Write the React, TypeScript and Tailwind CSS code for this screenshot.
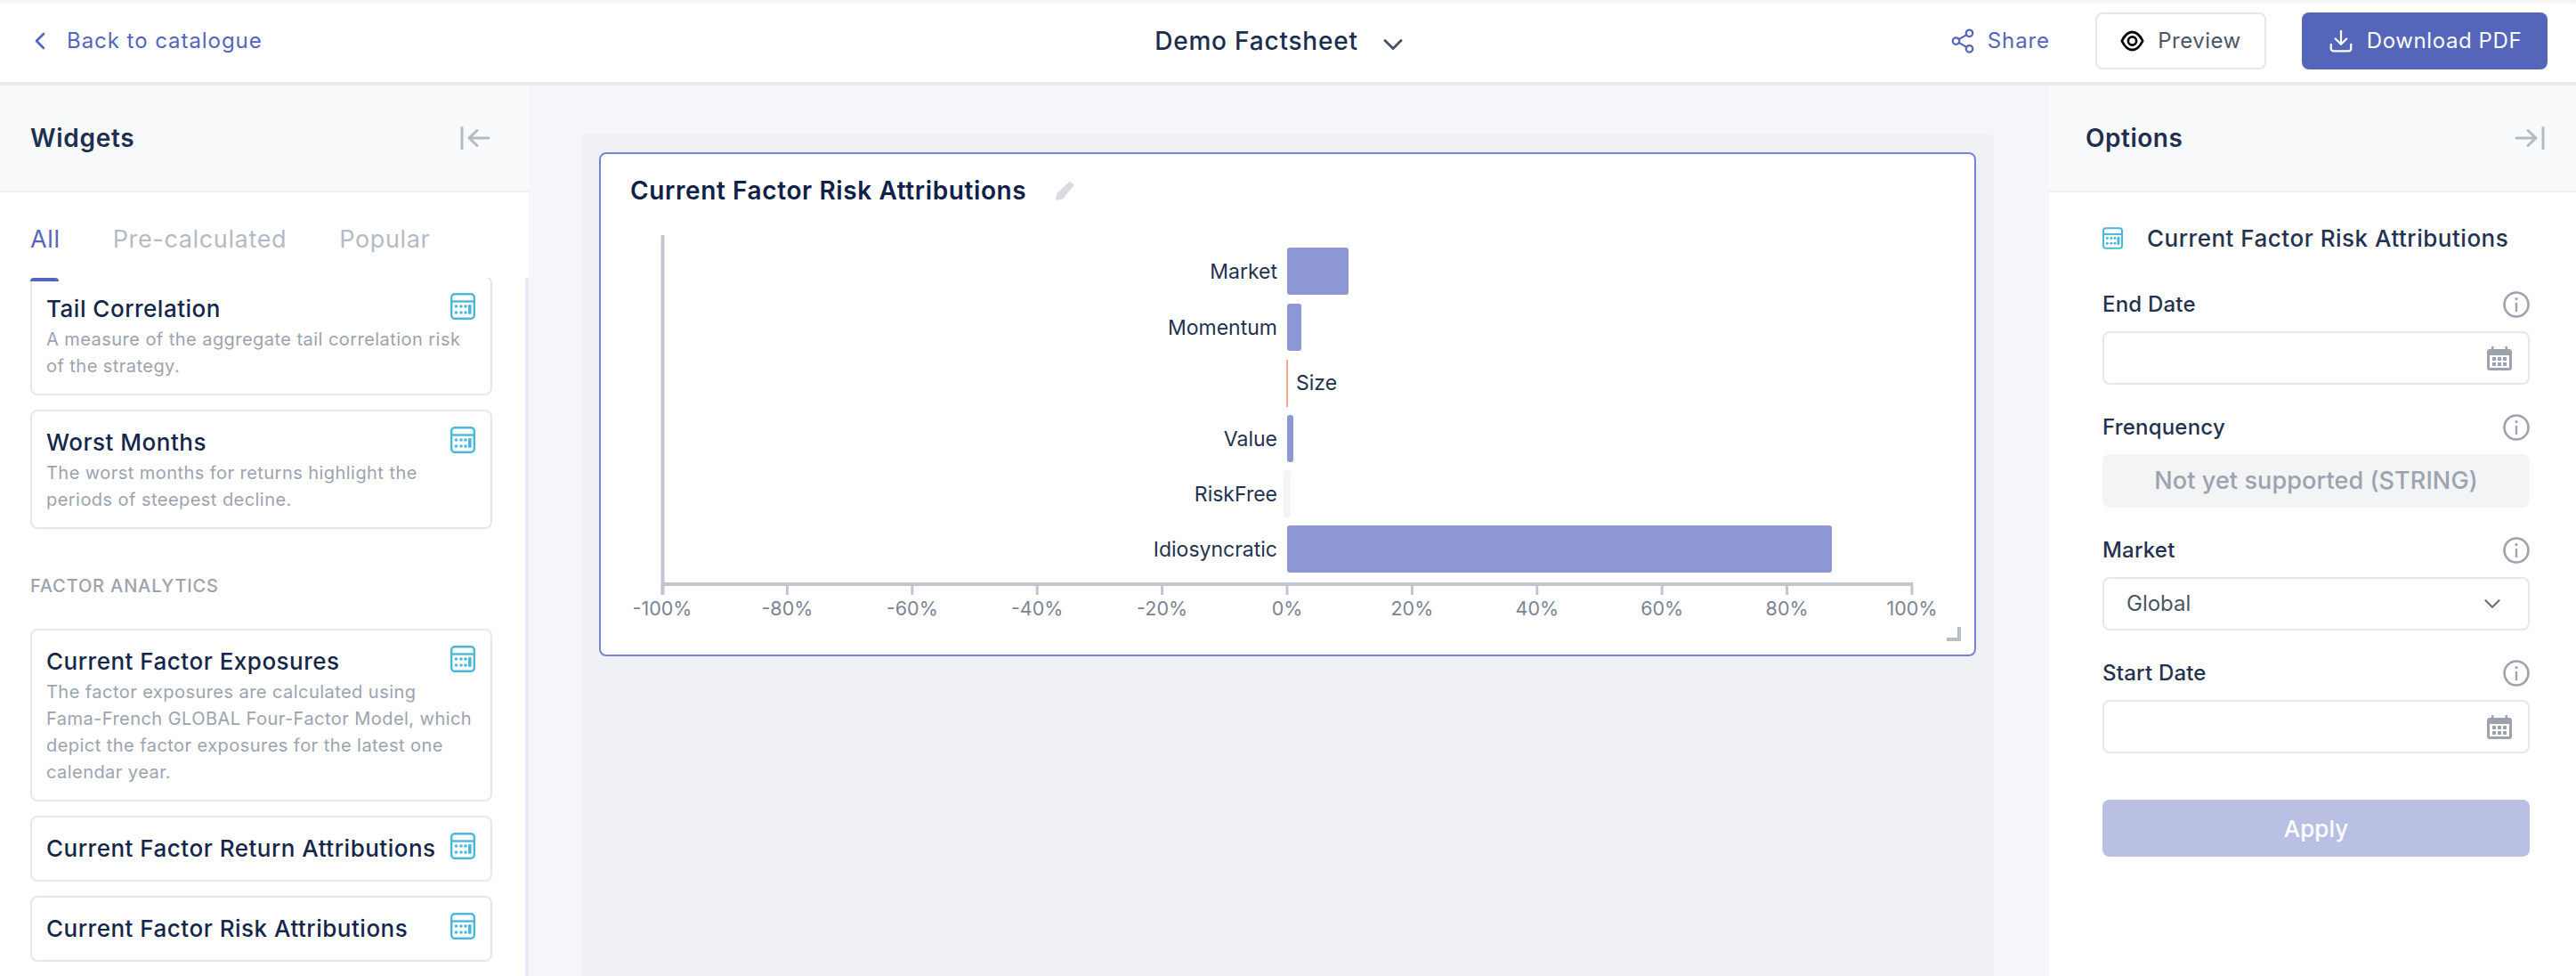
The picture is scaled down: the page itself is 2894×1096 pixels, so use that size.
import { ChevronDown, ChevronLeft, Share2, Download } from "lucide-react"

const BARS = [
  { label: "Market", y: 278, from: 1446, to: 1515, color: "#8d97d3" },
  { label: "Momentum", y: 341, from: 1446, to: 1462, color: "#8d97d3" },
  { label: "Size", y: 404, from: 1445, to: 1447, color: "#f4a68e" },
  { label: "Value", y: 466, from: 1446, to: 1453, color: "#8d97d3" },
  { label: "RiskFree", y: 528, from: 1442, to: 1450, color: "#f3f4f6" },
  { label: "Idiosyncratic", y: 590, from: 1446, to: 2058, color: "#8d97d3" },
]

const TICKS = [-100, -80, -60, -40, -20, 0, 20, 40, 60, 80, 100]

const CARDS_TOP = [
  {
    title: "Tail Correlation",
    text: "A measure of the aggregate tail correlation risk of the strategy.",
  },
  {
    title: "Worst Months",
    text: "The worst months for returns highlight the periods of steepest decline.",
  },
]

const CARDS_FACTOR = [
  {
    title: "Current Factor Exposures",
    text: "The factor exposures are calculated using Fama-French GLOBAL Four-Factor Model, which depict the factor exposures for the latest one calendar year.",
  },
  { title: "Current Factor Return Attributions", text: "" },
  { title: "Current Factor Risk Attributions", text: "" },
]

function CalcIcon({ className }: { className?: string }) {
  return (
    <svg viewBox="0 0 28 30" className={className} fill="none">
      <rect x="1.2" y="1.2" width="25.6" height="27.6" rx="3.5" stroke="#4cb8d9" strokeWidth="2.4" />
      <path d="M1.5 9.5h25" stroke="#4cb8d9" strokeWidth="2.4" />
      <g fill="#4cb8d9">
        <circle cx="6.5" cy="15" r="1.8" />
        <circle cx="12" cy="15" r="1.8" />
        <circle cx="6.5" cy="22" r="1.8" />
        <circle cx="12" cy="22" r="1.8" />
        <circle cx="17" cy="15" r="1.8" />
        <circle cx="17" cy="22" r="1.8" />
        <rect x="20" y="13" width="3.6" height="11" rx="1.4" />
      </g>
    </svg>
  )
}

function CalendarIcon({ className }: { className?: string }) {
  return (
    <svg viewBox="0 0 28 27" className={className}>
      <path
        fill="#9ca3af"
        fillRule="evenodd"
        d="M5 0h2.5v3h13V0H23v3h2a3 3 0 0 1 3 3v18a3 3 0 0 1-3 3H3a3 3 0 0 1-3-3V6a3 3 0 0 1 3-3h2zM3 10v14h22V10z"
      />
      <g fill="#9ca3af">
        <rect x="6" y="12" width="4" height="4" />
        <rect x="12" y="12" width="4" height="4" />
        <rect x="18" y="12" width="4" height="4" />
        <rect x="6" y="18" width="4" height="4" />
        <rect x="12" y="18" width="4" height="4" />
        <rect x="18" y="18" width="4" height="4" />
      </g>
    </svg>
  )
}

function InfoIcon() {
  return (
    <svg viewBox="0 0 30 30" className="w-[30px] h-[30px]" fill="none">
      <circle cx="15" cy="15" r="13.5" stroke="#9ca3af" strokeWidth="2.6" />
      <circle cx="15" cy="8.6" r="1.6" fill="#9ca3af" />
      <path d="M15 13v10" stroke="#9ca3af" strokeWidth="2.4" />
    </svg>
  )
}

function EyeIcon() {
  return (
    <svg viewBox="0 0 27 24" className="w-[27px] h-[24px]" fill="none">
      <path d="M1.8 12C5 5.5 9 2 13.5 2S22 5.5 25.2 12C22 18.5 18 22 13.5 22S5 18.5 1.8 12z" stroke="#000" strokeWidth="2.8" strokeLinejoin="round" />
      <circle cx="13.5" cy="12" r="4.6" stroke="#000" strokeWidth="2.6" />
    </svg>
  )
}

function Collapse({ flip }: { flip?: boolean }) {
  return (
    <svg viewBox="0 0 34 26" className={flip ? "w-[34px] h-[26px] -scale-x-100" : "w-[34px] h-[26px]"} fill="none" stroke="#b4bac6" strokeWidth="3" strokeLinecap="round">
      <path d="M2 1.5v23" />
      <path d="M32 13H11M19 4.5 10 13l9 8.5" strokeLinejoin="round" />
    </svg>
  )
}

function WidgetCard({ title, text }: { title: string; text: string }) {
  return (
    <div className="border-2 border-[#e5e7eb] rounded-lg bg-white pl-[16px] pr-[17px] py-[16px]">
      <CalcIcon className="float-right w-[28px] h-[30px] mt-[1px]" />
      <div className="text-[26px] leading-[38px] font-medium text-[#14264a] tracking-[0.5px] whitespace-nowrap">{title}</div>
      {text && <p className="text-[20px] leading-[30px] text-[#9ca3af] tracking-[0.45px]">{text}</p>}
    </div>
  )
}

function Field({ label, children }: { label: string; children: React.ReactNode }) {
  return (
    <div className="mb-[33px]">
      <div className="flex items-center justify-between h-[30px] mb-[15px]">
        <span className="text-[24px] font-medium text-[#24324f] tracking-[0.2px]">{label}</span>
        <InfoIcon />
      </div>
      {children}
    </div>
  )
}

function DateInput() {
  return (
    <div className="h-[60px] border-2 border-[#e5e7eb] rounded-lg flex items-center justify-end pr-[18px]">
      <CalendarIcon className="w-[28px] h-[27px]" />
    </div>
  )
}

function Chart() {
  const ox = 675
  const oy = 258
  const left = 744.5 - ox
  const right = 2149 - ox
  const axis = 656 - oy
  return (
    <svg width="1542" height="470" className="block">
      <rect x={left - 2} y={264 - oy} width="4" height="404" rx="1" fill="#c1c5cf" />
      <rect x={left} y={axis - 2} width={right - left} height="4" fill="#c1c5cf" />
      {TICKS.map((t) => {
        const x = 1446 - ox + t * 7.02
        return (
          <g key={t}>
            <rect x={x - 1.5} y={axis} width="3" height="12" fill="#c1c5cf" />
            <text x={x} y={683 - oy + 8} textAnchor="middle" fontSize="21.5" fill="#7c8395">
              {t}%
            </text>
          </g>
        )
      })}
      {BARS.map((b) => (
        <g key={b.label}>
          <rect x={b.from - ox} y={b.y - oy} width={b.to - b.from} height="53" rx={b.to - b.from > 2 ? 3 : 0} fill={b.color} />
          <text
            x={b.label === "Size" ? 1456 - ox : 1435 - ox}
            y={b.y - oy + (b.label === "Size" ? 34 : 35)}
            textAnchor={b.label === "Size" ? "start" : "end"}
            fontSize="23"
            fill="#24324f"
          >
            {b.label}
          </text>
        </g>
      ))}
    </svg>
  )
}

export default function App() {
  return (
    <div className="h-[1096px] w-[2894px] overflow-hidden flex flex-col bg-[#f5f6fa] [font-family:Inter,sans-serif]">
      {/* Top bar */}
      <header className="h-[96px] shrink-0 grid grid-cols-3 items-center border-b-4 border-[#e9eaef] bg-[linear-gradient(#f2f2f3,#ffffff_6px)]">
        <div className="flex items-center pl-[29px] text-[#5565b9]">
          <ChevronLeft className="w-[32px] h-[32px]" strokeWidth={2} />
          <span className="ml-[14px] text-[24px] tracking-[0.95px]">Back to catalogue</span>
        </div>
        <div className="flex items-center justify-center pr-[14px]">
          <span className="text-[28px] font-medium text-[#1c2d50] tracking-[0.8px]">Demo Factsheet</span>
          <ChevronDown className="w-[36px] h-[36px] ml-[21px] mt-[7px] text-[#4a5470]" strokeWidth={2} />
        </div>
        <div className="flex items-center justify-end pr-[32px]">
          <Share2 className="w-[30px] h-[30px] text-[#5565b9]" strokeWidth={1.8} />
          <span className="ml-[13px] text-[24px] text-[#5565b9] tracking-[0.9px]">Share</span>
          <button className="ml-[51px] w-[192px] h-[64px] border-2 border-[#e5e7eb] rounded-lg flex items-center justify-center gap-[15px] text-[24px] text-[#4b5563] tracking-[0.5px]">
            <EyeIcon />
            Preview
          </button>
          <button className="ml-[40px] w-[276px] h-[64px] rounded-lg bg-[#5565b9] flex items-center justify-center gap-[14px] text-[24px] text-white tracking-[0.6px]">
            <Download className="w-[30px] h-[30px]" strokeWidth={1.8} />
            Download PDF
          </button>
        </div>
      </header>

      <div className="flex-1 flex min-h-0">
        {/* Widgets panel */}
        <aside className="w-[594px] shrink-0 bg-white flex flex-col">
          <div className="h-[120px] shrink-0 bg-[#f9fafc] border-b-2 border-[#eceef2] flex items-center justify-between pl-[34px] pr-[43px]">
            <span className="text-[28px] font-semibold text-[#1f2f50] tracking-[0.7px]">Widgets</span>
            <Collapse />
          </div>
          <div className="h-[96px] shrink-0 relative flex items-center gap-[59px] pl-[34px] pt-[10px] text-[27px] text-[#b5bac7] tracking-[0.65px]">
            <span className="text-[#5565b9]">All</span>
            <span>Pre-calculated</span>
            <span>Popular</span>
            <div className="absolute z-10 left-[34px] -bottom-[4px] w-[32px] h-[4px] rounded-t bg-[#5565b9]" />
          </div>
          <div className="flex-1 min-h-0 flex overflow-hidden">
            <div className="flex-1 overflow-hidden pl-[34px] pr-[37px]">
              <div className="-mt-[2px] flex flex-col gap-[16px]">
                {CARDS_TOP.map((c) => (
                  <WidgetCard key={c.title} {...c} />
                ))}
                <div className="mt-[33px] mb-[17px] text-[20px] leading-[30px] font-medium text-[#9ca3af] tracking-[0.85px]">FACTOR ANALYTICS</div>
                {CARDS_FACTOR.map((c) => (
                  <WidgetCard key={c.title} {...c} />
                ))}
              </div>
            </div>
            <div className="w-[4px] bg-[#e6e9fa]" />
          </div>
        </aside>

        {/* Canvas */}
        <main className="flex-1 min-w-0 pl-[59px] pr-[62px] pt-[54px]">
          <div className="h-full rounded-t-lg bg-[#eff1f5] px-[20px] pt-[21px]">
            <div className="relative h-[566px] bg-white border-2 border-[#7584d6] rounded-lg">
              <div className="flex items-center h-[38px] mt-[22px] pl-[33px]">
                <span className="text-[28px] font-semibold text-[#0f2147] tracking-[0.6px]">Current Factor Risk Attributions</span>
                <svg viewBox="0 0 23 22" className="w-[23px] h-[22px] ml-[32px]">
                  <path d="M16.5 0.8 22 4.5 9 20.5l-8 1.3 1-7.3z" fill="#d8dbe1" />
                </svg>
              </div>
              <div className="mt-[25px]">
                <Chart />
              </div>
              <div className="absolute right-[15px] bottom-[15px] w-[16px] h-[16px] border-r-4 border-b-4 border-[#b9bec9]" />
            </div>
          </div>
        </main>

        {/* Options panel */}
        <aside className="w-[592px] shrink-0 bg-white flex flex-col">
          <div className="h-[120px] shrink-0 bg-[#f9fafc] border-b-2 border-[#eceef2] flex items-center justify-between pl-[41px] pr-[35px]">
            <span className="text-[28px] font-semibold text-[#1f2f50] tracking-[0.5px]">Options</span>
            <Collapse flip />
          </div>
          <div className="pl-[60px] pr-[52px] pt-[35px]">
            <div className="flex items-center h-[32px] mb-[44px]">
              <CalcIcon className="w-[23px] h-[25px]" />
              <span className="ml-[27px] text-[26px] font-medium text-[#24324f] tracking-[0.5px] whitespace-nowrap">Current Factor Risk Attributions</span>
            </div>
            <Field label="End Date">
              <DateInput />
            </Field>
            <Field label="Frenquency">
              <div className="h-[60px] rounded-lg bg-[#f3f4f6] flex items-center justify-center text-[27px] font-medium text-[#9ca3af] tracking-[0.1px]">Not yet supported (STRING)</div>
            </Field>
            <Field label="Market">
              <div className="h-[60px] border-2 border-[#e5e7eb] rounded-lg flex items-center justify-between pl-[25px] pr-[25px] text-[24px] text-[#4b5563]">
                Global
                <ChevronDown className="w-[30px] h-[30px] text-[#6b7280]" strokeWidth={1.8} />
              </div>
            </Field>
            <Field label="Start Date">
              <DateInput />
            </Field>
            <button className="mt-[19px] w-full h-[64px] rounded-lg bg-[#bac0e3] text-[26px] font-medium text-white">Apply</button>
          </div>
        </aside>
      </div>
    </div>
  )
}
